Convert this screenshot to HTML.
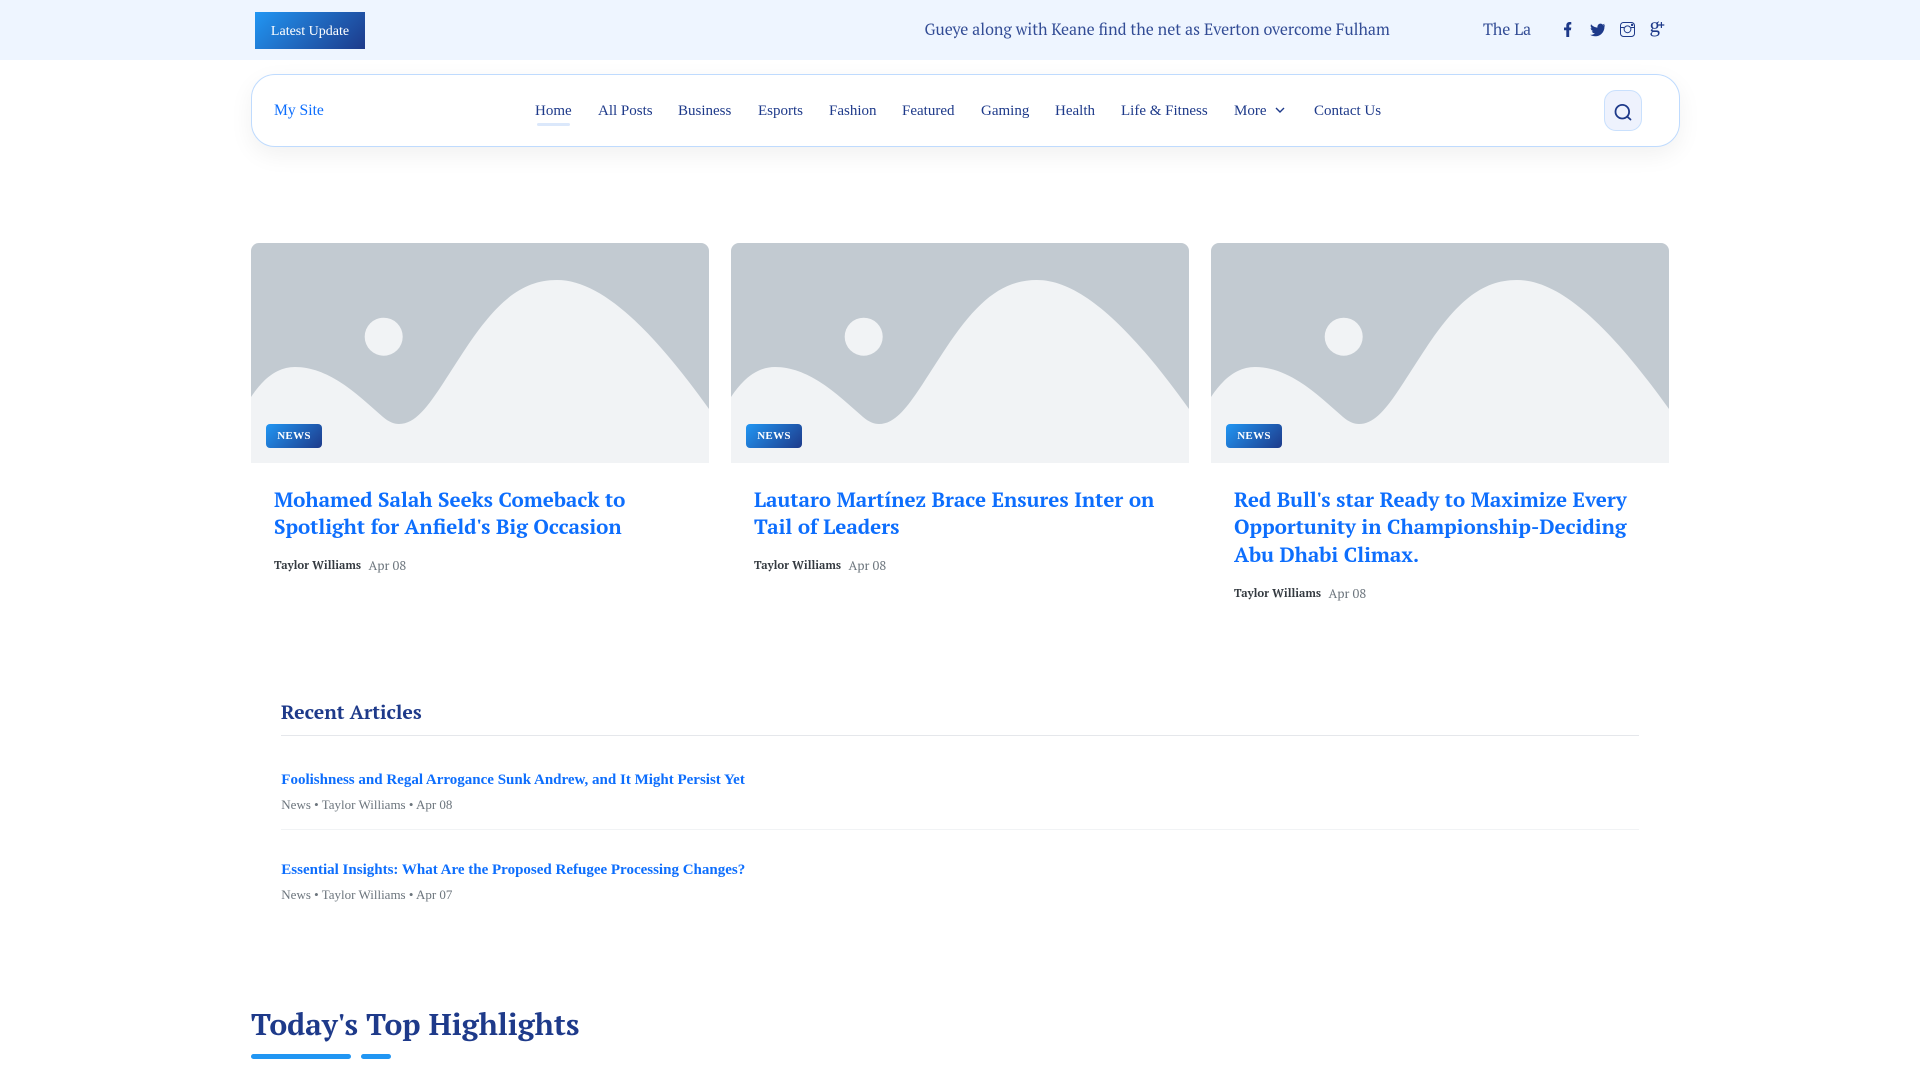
<!DOCTYPE html>
<html lang="en">
<head>
<meta charset="utf-8">
<title>My Site</title>
<style>
*{box-sizing:border-box;margin:0;padding:0}
html,body{width:1920px;height:1080px;overflow:hidden;background:#fff;font-family:"Liberation Serif",serif}
.a{position:absolute;white-space:nowrap}
.pt{font-family:"PT Serif","Liberation Serif",serif}
#top{position:absolute;left:0;top:0;width:1920px;height:60px;background:#eef5ff}
#btn{left:255px;top:12px;width:110px;height:37px;background:linear-gradient(135deg,#2196f3,#1e3a8a);color:#fff;font-size:14px;line-height:39px;text-align:center}
.tick{top:17px;font-size:16px;line-height:24px;color:#1e3a8a;opacity:.9}
#clip{position:absolute;left:900px;top:0;width:631px;height:60px;overflow:hidden}
#nav{position:absolute;left:251px;top:74px;width:1429px;height:73px;background:#fff;border:1px solid #bfdbfe;border-radius:24px;box-shadow:0 8px 24px rgba(0,0,0,.06)}
.n{top:100px;font-size:15px;line-height:22px;color:#1e3a8a}
#logo{left:274px;top:100px;font-size:15.6px;line-height:22px;color:#0d6efd}
#ul{position:absolute;left:537px;top:123px;width:33px;height:3px;border-radius:2px;background:#dbe8fb}
#sb{position:absolute;left:1604px;top:90px;width:38px;height:41px;border-radius:12px;background:#eef2fd;border:1px solid #c9e0fd}
.img{position:absolute;top:243px;width:458px;height:220px;border-radius:8px 8px 0 0;overflow:hidden;background:#c2cad1}
.img svg{display:block}
.badge{position:absolute;top:424px;width:56px;height:24px;border-radius:4px;background:linear-gradient(135deg,#2196f3,#1e3a8a);color:#fff;font-size:11px;font-weight:700;letter-spacing:.3px;line-height:25px;text-align:center}
.t{position:absolute;top:485.700px;width:440px;font-size:20.6px;line-height:27.5px;font-weight:700;color:#0d6efd}
.au{font-size:11.4px;font-weight:700;color:#343a40;line-height:18px}
.dt{font-size:12.8px;color:#6c757d;line-height:18px}
#ra{left:281px;top:698px;font-size:19.5px;line-height:28px;font-weight:700;color:#1e3a8a}
.hr{position:absolute;left:281px;width:1358px;height:1px}
.rt{left:281.300px;font-size:15px;font-weight:700;line-height:20px;color:#0d6efd}
.rm{left:281.300px;font-size:13px;line-height:18px;color:#6c757d}
#h2{left:251px;top:1003px;font-size:30px;line-height:42px;font-weight:700;color:#1e3a8a}
.bar{position:absolute;top:1054px;height:5px;border-radius:3px;background:#2196f3}
</style>
</head>
<body>
<div id="top"></div>
<div class="a" id="btn">Latest Update</div>
<div id="clip">
<div class="a tick pt" style="left:24.5px">Gueye along with Keane find the net as Everton overcome Fulham</div>
<div class="a tick pt" style="left:583px">The Last Word on the Match</div>
</div>
<svg class="a" style="left:1560px;top:18px" width="110" height="24" viewBox="0 0 110 24" fill="#1e3a8a">
<path d="M6.300 19V12.200H4V9.500H6.300V7.500C6.300 5.100 7.700 4 9.700 4C10.600 4 11.300 4.100 11.300 4.100V6.500H10.100C9.400 6.500 9.200 7 9.200 7.800V9.500H11.300L10.900 12.200H9.200V19Z"/>
<path d="M45 7.100C44.400 7.400 43.800 7.500 43.200 7.600C43.900 7.200 44.400 6.600 44.600 5.800C44 6.200 43.300 6.400 42.600 6.600C41.400 5.300 39.300 5.400 38.200 6.700C37.500 7.500 37.300 8.500 37.500 9.500C35 9.400 32.600 8.200 31.100 6.200C30.300 7.600 30.700 9.400 32.100 10.300C31.600 10.300 31.100 10.200 30.700 9.900C30.700 11.500 31.800 12.800 33.300 13.100C32.800 13.200 32.300 13.300 31.800 13.200C32.200 14.500 33.500 15.400 34.900 15.400C33.500 16.500 31.800 17 30 16.800C31.500 17.800 33.300 18.300 35.100 18.300C41.200 18.300 44.700 13.100 44.400 8.600C44.900 8.200 45 7.700 45 7.100Z"/>
<g fill="none" stroke="#1e3a8a" stroke-width="1"><rect x="60.500" y="4.500" width="14" height="14" rx="3"/><path d="M60.500 9.500H64M71 9.500H74.500"/><circle cx="67.500" cy="11.300" r="3.400"/></g>
<rect x="71" y="5.800" width="2.200" height="2.200" rx=".5"/>
<text x="89.500" y="13.800" font-family="Liberation Serif,serif" font-size="21" fill="#1e3a8a">g</text>
<path d="M98.500 6.400h2.300V4h1.200v2.400h2.300v1.200H102V10h-1.200V7.600h-2.300Z"/>
</svg>

<div id="nav"></div>
<div class="a" id="logo">My Site</div>
<div class="a n" style="left:535px">Home</div>
<div id="ul"></div>
<div class="a n" style="left:598px">All Posts</div>
<div class="a n" style="left:678px">Business</div>
<div class="a n" style="left:758px">Esports</div>
<div class="a n" style="left:829px">Fashion</div>
<div class="a n" style="left:902px">Featured</div>
<div class="a n" style="left:981px">Gaming</div>
<div class="a n" style="left:1055px">Health</div>
<div class="a n" style="left:1121px">Life &amp; Fitness</div>
<div class="a n" style="left:1234px">More</div>
<svg class="a" style="left:1274px;top:105px" width="12" height="10" viewBox="0 0 12 10" fill="none" stroke="#1e3a8a" stroke-width="1.400"><path d="M2 3l4 4 4-4"/></svg>
<div class="a n" style="left:1314px">Contact Us</div>
<div id="sb"></div>
<svg class="a" style="left:1612px;top:102px" width="20" height="20" viewBox="0 0 20 20" fill="none" stroke="#1e3a8a" stroke-width="1.800"><circle cx="10.300" cy="9.700" r="6.800"/><path d="M15.300 14.700L18.500 17.500" stroke-linecap="round"/></svg>

<div class="img" style="left:251px"><svg width="458" height="220" viewBox="0 0 458 220"><circle cx="132.700" cy="93.700" r="19" fill="#f1f3f5"/><path fill="#f1f3f5" d="M0 154C12 136 26 124 44 124C80 124 110 155 132 174C138 179 143 181 148 181C170 181 185 150 215 105C245 60 270 37 306 37C350 37 400 85 458 166V220H0Z"/></svg></div>
<div class="img" style="left:731px"><svg width="458" height="220" viewBox="0 0 458 220"><circle cx="132.700" cy="93.700" r="19" fill="#f1f3f5"/><path fill="#f1f3f5" d="M0 154C12 136 26 124 44 124C80 124 110 155 132 174C138 179 143 181 148 181C170 181 185 150 215 105C245 60 270 37 306 37C350 37 400 85 458 166V220H0Z"/></svg></div>
<div class="img" style="left:1211px"><svg width="458" height="220" viewBox="0 0 458 220"><circle cx="132.700" cy="93.700" r="19" fill="#f1f3f5"/><path fill="#f1f3f5" d="M0 154C12 136 26 124 44 124C80 124 110 155 132 174C138 179 143 181 148 181C170 181 185 150 215 105C245 60 270 37 306 37C350 37 400 85 458 166V220H0Z"/></svg></div>
<div class="badge" style="left:266px">NEWS</div>
<div class="badge" style="left:746px">NEWS</div>
<div class="badge" style="left:1226px">NEWS</div>

<div class="t pt" style="left:274px">Mohamed Salah Seeks Comeback to<br>Spotlight for Anfield's Big Occasion</div>
<div class="t pt" style="left:754px">Lautaro Martínez Brace Ensures Inter on<br>Tail of Leaders</div>
<div class="t pt" style="left:1234px">Red Bull's star Ready to Maximize Every<br>Opportunity in Championship-Deciding<br>Abu Dhabi Climax.</div>

<div class="a au pt" style="left:274px;top:556.500px">Taylor Williams</div><div class="a dt pt" style="left:368.500px;top:556.500px">Apr 08</div>
<div class="a au pt" style="left:754px;top:556.500px">Taylor Williams</div><div class="a dt pt" style="left:848.500px;top:556.500px">Apr 08</div>
<div class="a au pt" style="left:1234px;top:584.500px">Taylor Williams</div><div class="a dt pt" style="left:1328.500px;top:584.500px">Apr 08</div>

<div class="a pt" id="ra">Recent Articles</div>
<div class="hr" style="top:735px;background:#e5e7eb"></div>
<div class="a rt" style="top:770px">Foolishness and Regal Arrogance Sunk Andrew, and It Might Persist Yet</div>
<div class="a rm" style="top:796px">News • Taylor Williams • Apr 08</div>
<div class="hr" style="top:829px;background:#f1f3f5"></div>
<div class="a rt" style="top:860px">Essential Insights: What Are the Proposed Refugee Processing Changes?</div>
<div class="a rm" style="top:886px">News • Taylor Williams • Apr 07</div>

<div class="a pt" id="h2">Today's Top Highlights</div>
<div class="bar" style="left:251px;width:100px"></div>
<div class="bar" style="left:361px;width:30px"></div>
</body>
</html>
